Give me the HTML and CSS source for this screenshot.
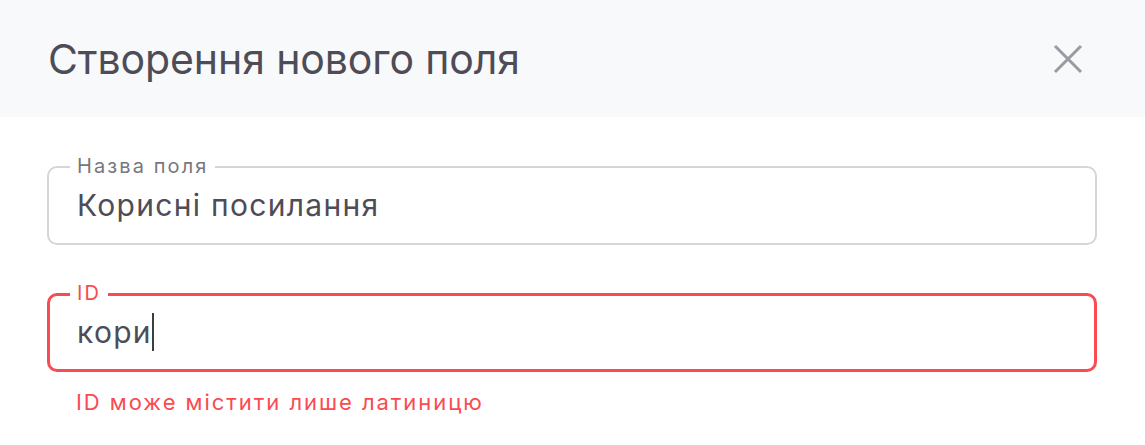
FILE: index.html
```html
<!DOCTYPE html>
<html lang="uk">
<head>
<meta charset="utf-8">
<title>Створення нового поля</title>
<link rel="stylesheet" href="styles.css">
</head>
<body>
<div class="dialog">
  <header class="dialog-header">
    <h1 class="dialog-title">Створення нового поля</h1>
    <button class="close-btn" aria-label="Закрити">
      <svg width="30" height="30" viewBox="0 0 30 30" aria-hidden="true">
        <path d="M2 2 L28 28 M28 2 L2 28" stroke="#9b99a1" stroke-width="3" fill="none"/>
      </svg>
    </button>
  </header>
  <div class="dialog-body">
    <div class="form-row">
      <div class="field">
        <span class="field-label">Назва поля</span>
        <span class="field-value">Корисні посилання</span>
      </div>
    </div>
    <div class="form-row">
      <div class="field field-error">
        <span class="field-label">ID</span>
        <span class="field-value">кори<span class="caret"></span></span>
      </div>
      <div class="error-text">ID може містити лише латиницю</div>
    </div>
  </div>
</div>
</body>
</html>
```
FILE: styles.css
```css
html, body {
  margin: 0;
  padding: 0;
  background: #ffffff;
}
body {
  font-family: Inter, "Noto Sans", sans-serif;
  color: #4e4c57;
}
.dialog {
  width: 1145px;
}
.dialog-header {
  height: 117px;
  background: #f8f9fb;
  display: flex;
  align-items: center;
  justify-content: space-between;
  padding: 0 62px 0 48px;
  box-sizing: border-box;
}
.dialog-title {
  margin: 0;
  font-size: 41px;
  font-weight: 400;
  color: #4e4c57;
  letter-spacing: -0.1px;
}
.close-btn {
  background: none;
  border: 0;
  padding: 0;
  width: 30px;
  height: 30px;
  display: flex;
  cursor: pointer;
}
.dialog-body {
  padding: 49px 48px 0 47px;
  display: flex;
  flex-direction: column;
  gap: 48px;
}
.form-row {
  display: flex;
  flex-direction: column;
}
.field {
  position: relative;
  height: 79px;
  box-sizing: border-box;
  border: 2px solid #d6d6d8;
  border-radius: 10px;
  display: flex;
  align-items: center;
  padding: 0 0 2px 28px;
}
.field-label {
  position: absolute;
  top: -12px;
  left: 21px;
  padding: 0 7px;
  background: #ffffff;
  font-size: 20px;
  line-height: 20px;
  letter-spacing: 2.1px;
  color: #78777e;
}
.field-value {
  font-size: 30px;
  line-height: 36px;
  letter-spacing: 1.3px;
  color: #4e4c57;
  display: flex;
  align-items: center;
}
.field-error {
  border: 3px solid #f94b51;
  padding-left: 27px;
}
.field-error .field-label {
  color: #f94b51;
  top: -13px;
  left: 20px;
}
.caret {
  display: inline-block;
  width: 2px;
  height: 38px;
  background: #3d3b45;
  margin-left: 0;
}
.error-text {
  margin-top: 17px;
  padding-left: 29px;
  font-size: 22px;
  line-height: 26px;
  color: #f94b51;
  letter-spacing: 1.95px;
}
```
